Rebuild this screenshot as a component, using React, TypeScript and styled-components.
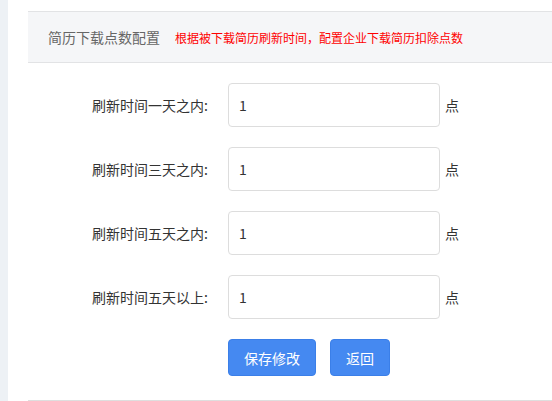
import React from "react";
import styled, { createGlobalStyle } from "styled-components";

const Global = createGlobalStyle`
  html, body { margin: 0; padding: 0; background: #fff; }
  body { font-family: "Noto Sans CJK SC", "Noto Sans", sans-serif; }
  * { box-sizing: border-box; }
`;

const Layout = styled.div`
  display: flex;
  width: 552px;
  height: 401px;
  overflow: hidden;
`;

const Sidebar = styled.div`
  width: 8px;
  flex: none;
  background: #edf1f5;
`;

const Main = styled.div`
  flex: 1;
  padding: 11px 0 0 20px;
`;

const Panel = styled.div`
  border-bottom: 1px solid #dedede;
`;

const Header = styled.div`
  height: 52px;
  display: flex;
  align-items: center;
  gap: 15px;
  padding-left: 20px;
  background: #f5f6f8;
  border-top: 1px solid #e2e3e5;
  border-bottom: 1px solid #e2e3e5;
  white-space: nowrap;
`;

const Title = styled.span`
  font-size: 14px;
  color: #666;
`;

const Notice = styled.span`
  font-size: 12px;
  color: #ff0000;
`;

const Form = styled.div`
  display: flex;
  flex-direction: column;
  gap: 20px;
  padding: 20px 0 24px;
`;

const Row = styled.div`
  display: flex;
  align-items: center;
`;

const Label = styled.label`
  width: 180px;
  margin-right: 20px;
  text-align: right;
  font-size: 14px;
  color: #333;
`;

const Input = styled.input`
  width: 212px;
  height: 44px;
  padding: 0 10px;
  border: 1px solid #dddddd;
  border-radius: 4px;
  font-family: inherit;
  font-size: 14px;
  color: #333;
  outline: none;
`;

const Unit = styled.span`
  margin-left: 5px;
  font-size: 14px;
  color: #333;
`;

const Actions = styled.div`
  display: flex;
  gap: 14px;
  padding-left: 200px;
`;

const Button = styled.button`
  height: 37px;
  padding: 0 15px;
  border: 1px solid #3b7fe8;
  border-radius: 4px;
  background: #4589f1;
  color: #fff;
  font-family: inherit;
  font-size: 14px;
  cursor: pointer;
`;

const rows = [
  "刷新时间一天之内:",
  "刷新时间三天之内:",
  "刷新时间五天之内:",
  "刷新时间五天以上:",
];

export default function App() {
  return (
    <>
      <Global />
      <Layout>
        <Sidebar />
        <Main>
          <Panel>
            <Header>
              <Title>简历下载点数配置</Title>
              <Notice>根据被下载简历刷新时间，配置企业下载简历扣除点数</Notice>
            </Header>
            <Form>
              {rows.map((r) => (
                <Row key={r}>
                  <Label>{r}</Label>
                  <Input defaultValue="1" />
                  <Unit>点</Unit>
                </Row>
              ))}
              <Actions>
                <Button>保存修改</Button>
                <Button>返回</Button>
              </Actions>
            </Form>
          </Panel>
        </Main>
      </Layout>
    </>
  );
}
